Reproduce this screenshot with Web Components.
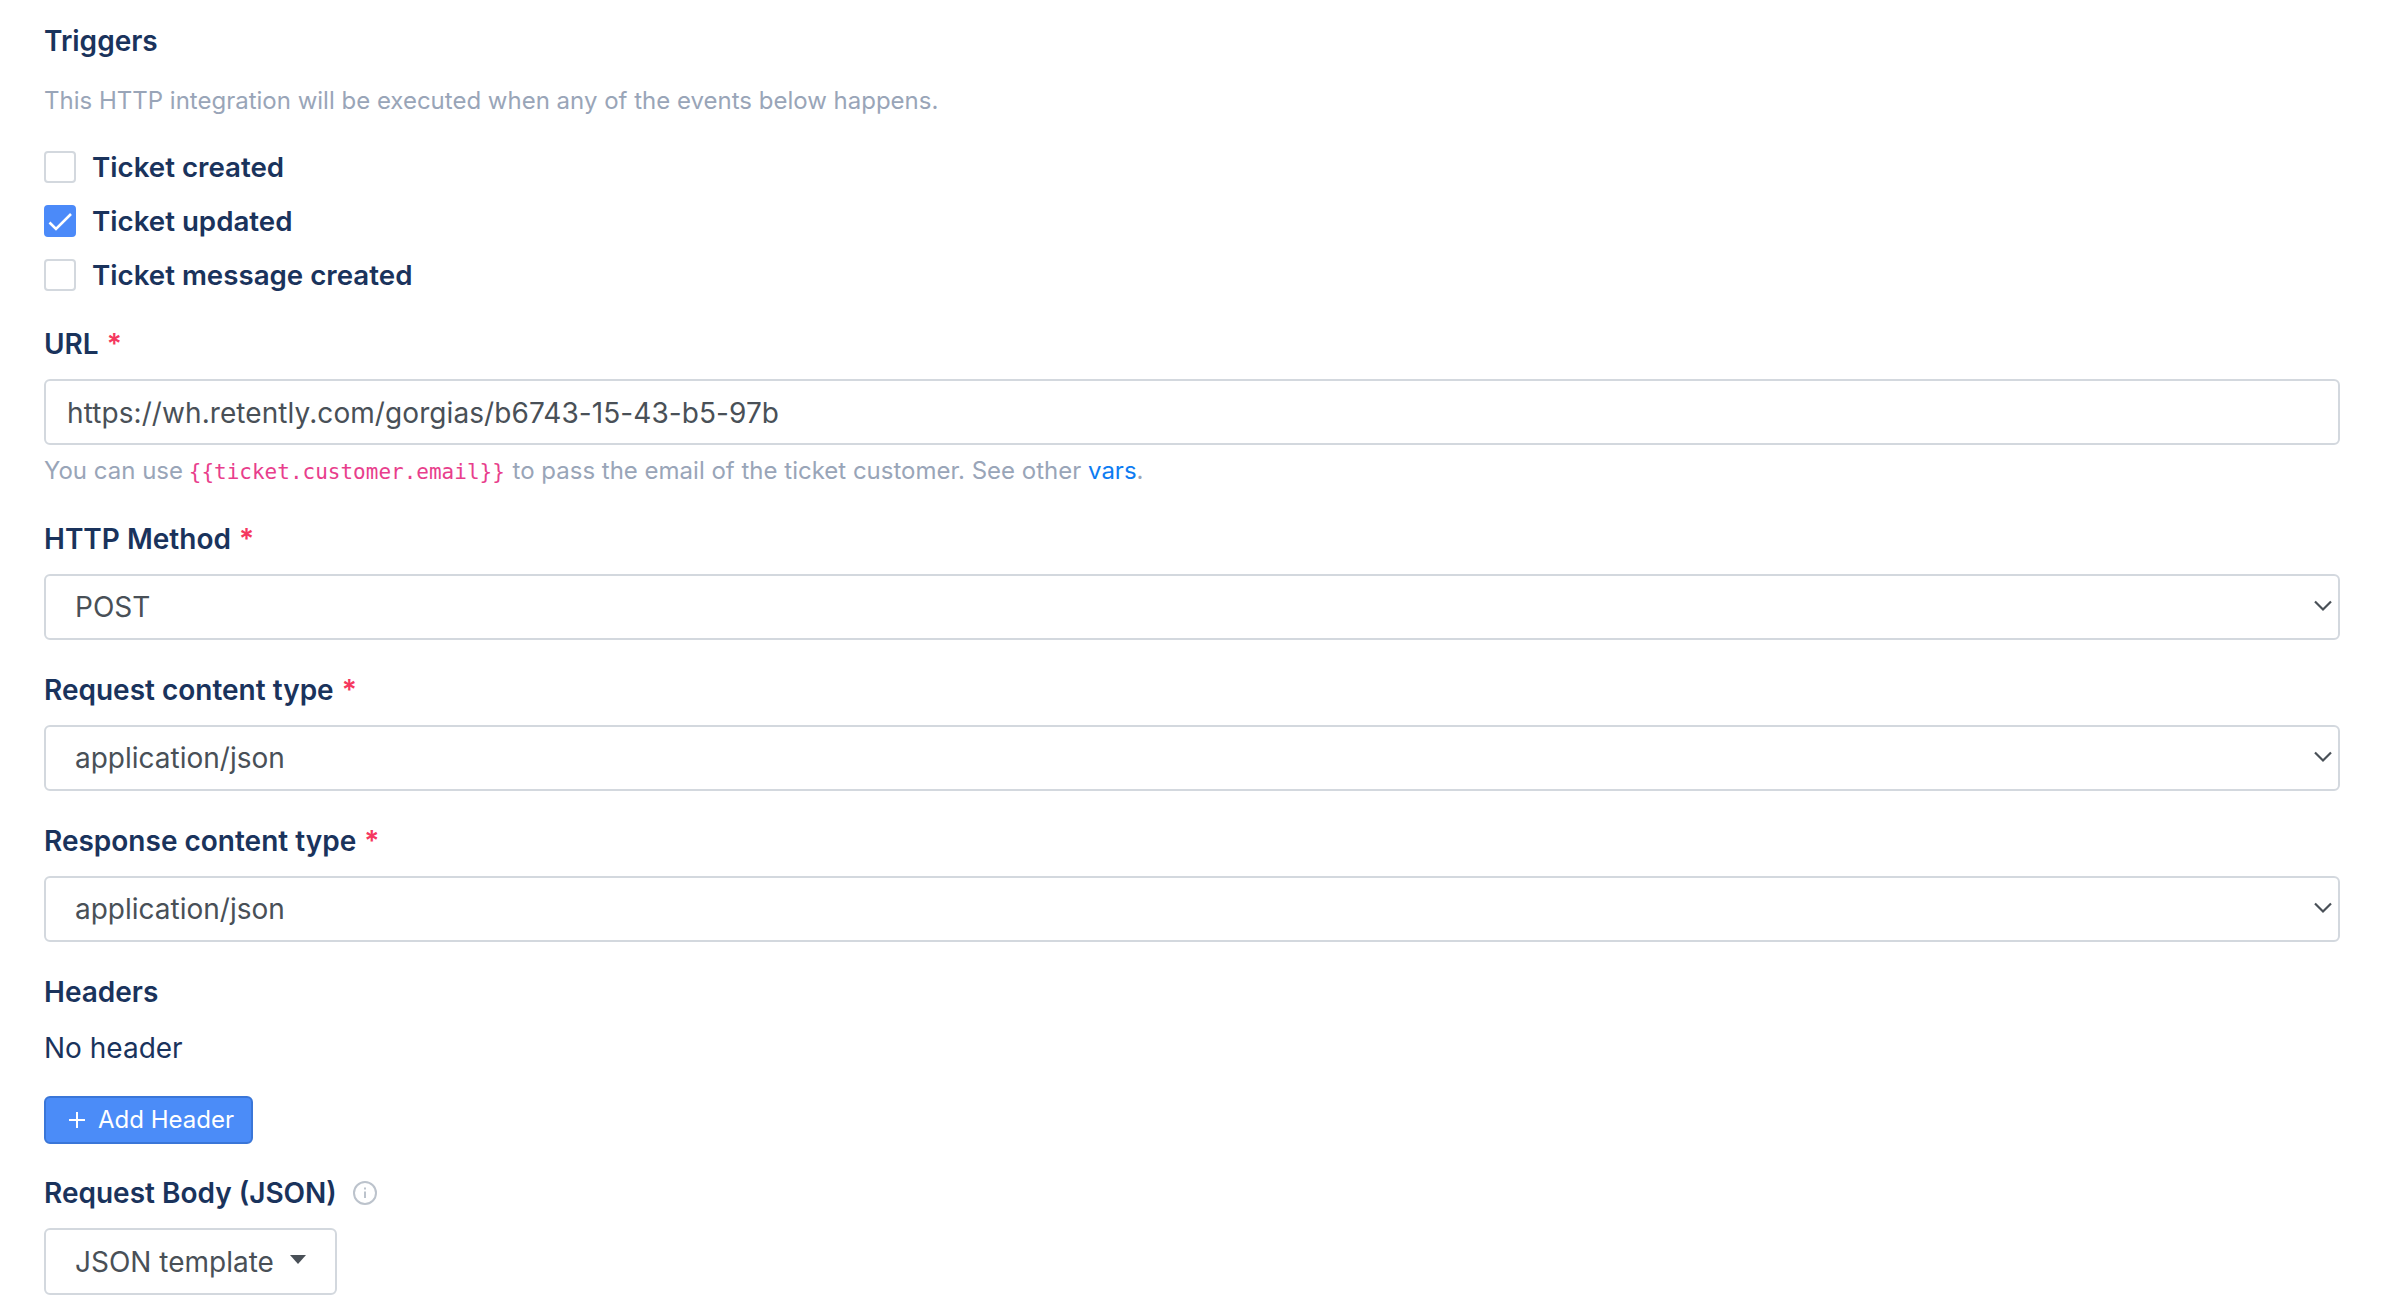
<!DOCTYPE html>
<html lang="en">
<head>
<meta charset="utf-8">
<title>HTTP integration</title>
<style>
  html, body { margin: 0; background: #fff; }
  body { font-family: Inter, "Liberation Sans", sans-serif; color: #1a335c; }
</style>
</head>
<body>
<template id="http-form-template">
  <style>
    :host {
      display: flex;
      flex-direction: column;
      padding: 23px 60px 0 44px;
      font-size: 28px;
      line-height: 36px;
    }

    .hint {
      margin-top: 24px;
      font-size: 24px;
      color: #99a5b8;
    }

    .checks {
      display: flex;
      flex-direction: column;
      gap: 18px;
      margin-top: 30px;
      margin-bottom: 33px;
    }

    .help {
      margin-top: 8px;
      margin-bottom: -1px;
      font-size: 24px;
      color: #99a5b8;
    }

    code {
      font-family: "DejaVu Sans Mono", "Liberation Mono", monospace;
      font-size: 21px;
      margin-left: -1px;
      margin-right: 1px;
      color: #e83e8c;
    }

    a {
      color: #0d7cf2;
      text-decoration: none;
    }

    form-field {
      margin-bottom: 32px;
    }

    .empty {
      margin-top: 20px;
      margin-bottom: 30px;
    }
  </style>
  <form-label>Triggers</form-label>
  <div class="hint">This HTTP integration will be executed when any of the events below happens.</div>
  <div class="checks">
    <check-row>Ticket created</check-row>
    <check-row checked>Ticket updated</check-row>
    <check-row>Ticket message created</check-row>
  </div>
  <form-field label="URL" required>
    <text-box>https://wh.retently.com/gorgias/b6743-15-43-b5-97b</text-box>
    <div class="help" slot="help">You can use <code>{{ticket.customer.email}}</code> to pass the email of the ticket customer. See other <a href="#">vars</a>.</div>
  </form-field>
  <form-field label="HTTP Method" required><select-box>POST</select-box></form-field>
  <form-field label="Request content type" required><select-box>application/json</select-box></form-field>
  <form-field label="Response content type" required><select-box>application/json</select-box></form-field>
  <form-label>Headers</form-label>
  <div class="empty">No header</div>
  <add-button>Add Header</add-button>
  <form-label style="margin-top:31px" info>Request Body (JSON)</form-label>
  <drop-button style="margin-top:17px">JSON template</drop-button>
</template>

<script>
  function defineSimple(name, html, setup) {
    customElements.define(name, class extends HTMLElement {
      constructor() {
        super();
        this.root = this.attachShadow({ mode: "open" });
        this.root.innerHTML = html;
        if (setup) setup(this);
      }
    });
  }

  defineSimple("form-label", `
    <style>
      :host { display: flex; align-items: center; font-weight: 600; font-size: 28px; line-height: 36px; color: #1a335c; }
      svg { display: none; width: 24px; height: 24px; margin-left: 16px; margin-top: -1px; }
      :host([info]) svg { display: block; }
      .star { display: none; margin-left: 8px; color: #f5385f; font-weight: 600; }
      :host([required]) .star { display: inline; }
    </style>
    <span><slot></slot><span class="star">*</span></span>
    <svg viewBox="0 0 24 24" fill="none" stroke="#bcc3cc" stroke-width="2">
      <circle cx="12" cy="12" r="11"/>
      <path d="M12 10.5v6.5"/>
      <path d="M12 6.6v2" />
    </svg>
  `);

  defineSimple("form-field", `
    <style>
      :host { display: block; }
      .control { display: block; margin-top: 17px; }
    </style>
    <form-label></form-label>
    <div class="control"><slot></slot></div>
    <slot name="help"></slot>
  `, el => {
    const label = el.root.querySelector("form-label");
    label.textContent = el.getAttribute("label");
    if (el.hasAttribute("required")) label.setAttribute("required", "");
  });

  const boxCss = `
    display: block;
    box-sizing: border-box;
    height: 66px;
    border: 2px solid #d3d8de;
    border-radius: 6px;
    background: #fff;
    font-size: 28px;
    line-height: 62px;
    color: #495057;
  `;

  defineSimple("text-box", `
    <style>:host { ${boxCss} line-height: 64px; padding-left: 21px; letter-spacing: 0.08px; }</style>
    <slot></slot>
  `);

  defineSimple("select-box", `
    <style>
      :host { ${boxCss} position: relative; padding-left: 29px; }
      svg { position: absolute; right: 6px; top: 24px; width: 18px; height: 12px; }
    </style>
    <slot></slot>
    <svg viewBox="0 0 18 12" fill="none" stroke="#495057" stroke-width="2.2"><path d="M1 1.5l8 8 8-8"/></svg>
  `);

  defineSimple("check-row", `
    <style>
      :host { display: flex; align-items: center; gap: 16px; font-weight: 600; font-size: 27.7px; line-height: 36px; color: #1a335c; }
      .box {
        box-sizing: border-box;
        width: 32px;
        height: 32px;
        border: 2px solid #d3d8de;
        border-radius: 4px;
        display: flex;
        align-items: center;
        justify-content: center;
      }
      svg { display: none; width: 24px; height: 20px; }
      :host([checked]) .box { background: #4b8af9; border-color: #4b8af9; }
      :host([checked]) svg { display: block; }
    </style>
    <div class="box">
      <svg viewBox="0 0 24 20" fill="none" stroke="#fff" stroke-width="2.6"><path d="M1.5 11.5l6.5 6.5L23 3"/></svg>
    </div>
    <slot></slot>
  `);

  defineSimple("add-button", `
    <style>
      :host {
        display: flex;
        align-items: center;
        box-sizing: border-box;
        width: 209px;
        height: 48px;
        padding-left: 22px;
        gap: 12px;
        background: #4b8cf8;
        border: 2px solid #3a76d8;
        border-radius: 6px;
        font-size: 24px;
        color: #fff;
      }
      svg { width: 18px; height: 18px; }
    </style>
    <svg viewBox="0 0 18 18" stroke="#fff" stroke-width="2" fill="none"><path d="M9 1v16M1 9h16"/></svg>
    <slot></slot>
  `);

  defineSimple("drop-button", `
    <style>
      :host {
        display: flex;
        align-items: center;
        box-sizing: border-box;
        width: 293px;
        height: 67px;
        padding-left: 29px;
        gap: 16px;
        border: 2px solid #d3d8de;
        border-radius: 6px;
        font-size: 28px;
        color: #495057;
      }
      i { width: 0; height: 0; border: 8.5px solid transparent; border-top: 9px solid #495057; border-bottom: 0; margin-top: -5px; }
    </style>
    <slot></slot>
    <i></i>
  `);

  defineSimple("http-form", "", el => {
    el.root.appendChild(document.getElementById("http-form-template").content.cloneNode(true));
  });
</script>
<http-form></http-form>
</body>
</html>
